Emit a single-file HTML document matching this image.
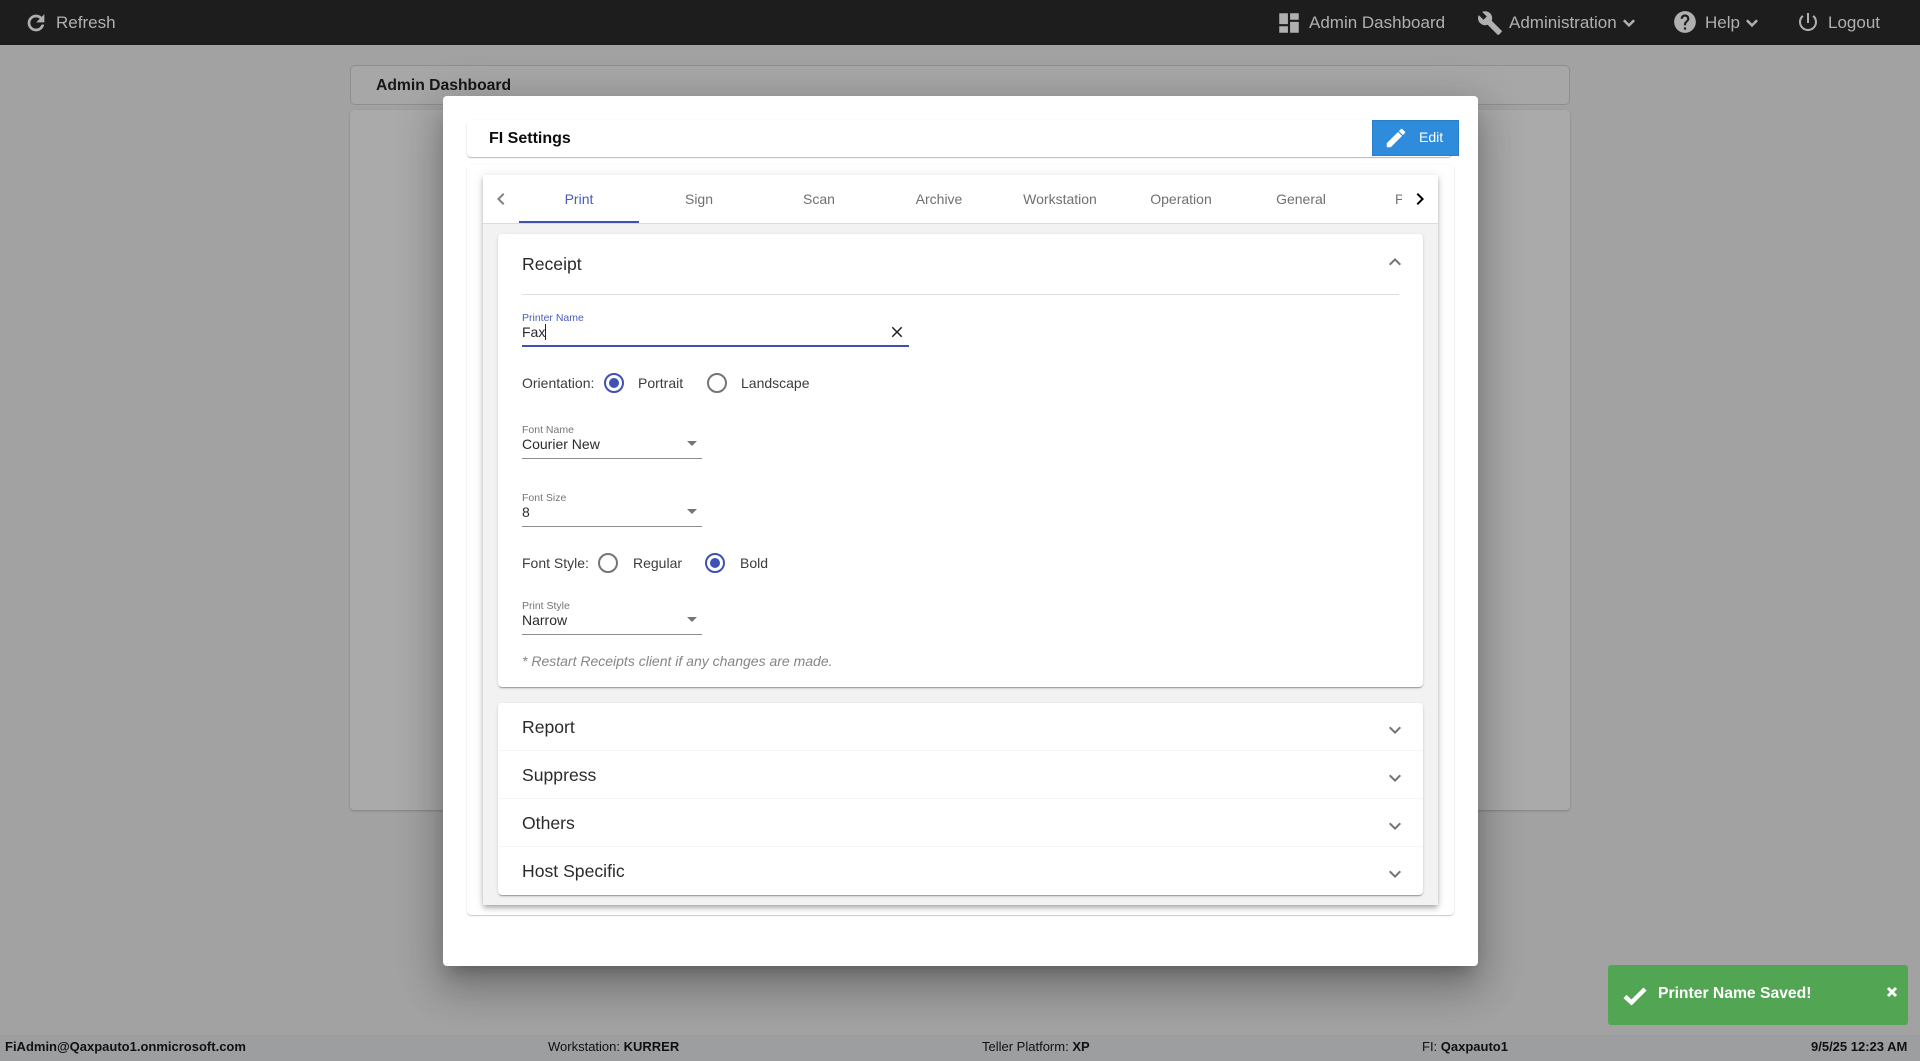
<!DOCTYPE html>
<html><head><meta charset="utf-8"><title>FI Settings</title>
<style>
*{box-sizing:border-box}
html,body{margin:0;padding:0;width:1920px;height:1061px;overflow:hidden;background:#a2a2a2;font-family:"Liberation Sans",Arial,sans-serif}
div,span.t,svg{position:absolute}
.t{white-space:nowrap;line-height:20px;height:20px;position:absolute}
.nav{color:#b0b0b0;font-size:17px}
.tab{font-size:14px;color:#707070;width:120px;text-align:center;top:189px}
.lbl{font-size:10.5px;color:#757575;left:522px}
.val{font-size:14px;color:#2b2b2b;left:522px}
.txt{font-size:14px;color:#3c3c3c}
.ttl{font-size:17.6px;color:#2a2a2a;left:522px}
.ul{left:522px;width:180px;height:1px;background:#8d8d8d}
.foot{font-size:13px;color:#111;top:1037px}
b{font-weight:bold}
</style></head>
<body>
<!-- background -->
<div style="left:0;top:0;width:1920px;height:45px;background:#1d1d1d"></div>
<svg style="left:24px;top:11px" width="24" height="24" viewBox="0 0 24 24" fill="#b0b0b0" stroke="#b0b0b0" stroke-width=".7"><path d="M17.65 6.35C16.2 4.9 14.21 4 12 4c-4.42 0-7.99 3.58-7.99 8s3.57 8 7.99 8c3.73 0 6.84-2.55 7.73-6h-2.08c-.82 2.33-3.04 4-5.65 4-3.31 0-6-2.69-6-6s2.69-6 6-6c1.66 0 3.14.69 4.22 1.78L13 11h7V4l-2.35 2.35z"/></svg>
<span class="t nav" style="left:56px;top:13px">Refresh</span>
<svg style="left:1276px;top:10px" width="26" height="26" viewBox="0 0 24 24" fill="#b0b0b0"><path d="M3 13h8V3H3v10zm0 8h8v-6H3v6zm10 0h8V11h-8v10zm0-18v6h8V3h-8z"/></svg>
<span class="t nav" style="left:1309px;top:13px">Admin Dashboard</span>
<svg style="left:1477px;top:10px" width="26" height="26" viewBox="0 0 24 24" fill="#b0b0b0"><path d="M22.7 19l-9.1-9.1c.9-2.3.4-5-1.5-6.9-2-2-5-2.4-7.4-1.3L9 6 6 9 1.6 4.7C.4 7.1.9 10.1 2.9 12.1c1.9 1.9 4.6 2.4 6.9 1.5l9.1 9.1c.4.4 1 .4 1.4 0l2.3-2.3c.5-.4.5-1.1.1-1.4z"/></svg>
<span class="t nav" style="left:1509px;top:13px">Administration</span>
<svg style="left:1618px;top:12px" width="22" height="22" viewBox="0 0 24 24" fill="#b0b0b0" stroke="#b0b0b0" stroke-width=".8"><path d="M16.59 8.59L12 13.17 7.41 8.59 6 10l6 6 6-6z"/></svg>
<svg style="left:1672px;top:9px" width="26" height="26" viewBox="0 0 24 24" fill="#b0b0b0"><path d="M12 2C6.48 2 2 6.48 2 12s4.48 10 10 10 10-4.48 10-10S17.52 2 12 2zm1 17h-2v-2h2v2zm2.07-7.75l-.9.92C13.45 12.9 13 13.5 13 15h-2v-.5c0-1.1.45-2.1 1.17-2.83l1.24-1.26c.37-.36.59-.86.59-1.41 0-1.1-.9-2-2-2s-2 .9-2 2H8c0-2.21 1.79-4 4-4s4 1.79 4 4c0 .88-.36 1.68-.93 2.25z"/></svg>
<span class="t nav" style="left:1705px;top:13px">Help</span>
<svg style="left:1741px;top:12px" width="22" height="22" viewBox="0 0 24 24" fill="#b0b0b0" stroke="#b0b0b0" stroke-width=".8"><path d="M16.59 8.59L12 13.17 7.41 8.59 6 10l6 6 6-6z"/></svg>
<svg style="left:1796px;top:10px" width="24" height="24" viewBox="0 0 24 24" fill="#b0b0b0"><path d="M13 3h-2v10h2V3zm4.83 2.17l-1.42 1.42C17.99 7.86 19 9.81 19 12c0 3.87-3.13 7-7 7s-7-3.13-7-7c0-2.19 1.01-4.14 2.58-5.42L6.17 5.17C4.23 6.82 3 9.26 3 12c0 4.97 4.03 9 9 9s9-4.03 9-9c0-2.74-1.23-5.18-3.17-6.83z"/></svg>
<span class="t nav" style="left:1828px;top:13px">Logout</span>

<div style="left:350px;top:65px;width:1220px;height:40px;border:1px solid #8f8f8f;border-radius:5px;background:#a7a7a7"></div>
<span class="t" style="left:376px;top:76px;font-size:15.7px;font-weight:bold;color:#161616">Admin Dashboard</span>
<div style="left:350px;top:110px;width:1220px;height:700px;border-radius:4px;background:#aaaaaa;box-shadow:0 1px 2px rgba(0,0,0,.2)"></div>

<!-- footer -->
<div style="left:0;top:1035px;width:1920px;height:26px;background:#9d9e9f"></div>
<span class="t foot" style="left:5px"><b>FiAdmin@Qaxpauto1.onmicrosoft.com</b></span>
<span class="t foot" style="left:548px">Workstation: <b>KURRER</b></span>
<span class="t foot" style="left:982px">Teller Platform: <b>XP</b></span>
<span class="t foot" style="left:1422px">FI: <b>Qaxpauto1</b></span>
<span class="t foot" style="left:1811px"><b>9/5/25 12:23 AM</b></span>

<!-- modal -->
<div style="left:443px;top:96px;width:1035px;height:870px;background:#fff;border-radius:4px;box-shadow:0 11px 15px -7px rgba(0,0,0,.24),0 24px 38px 3px rgba(0,0,0,.17),0 9px 46px 8px rgba(0,0,0,.14)"></div>

<div style="left:467px;top:120px;width:985px;height:37px;background:#fff;border-radius:4px;box-shadow:0 1px 1px rgba(0,0,0,.28),0 0 2px rgba(0,0,0,.04)"></div>
<span class="t" style="left:489px;top:129px;font-size:16px;font-weight:bold;color:#0c0c0c">FI Settings</span>
<div style="left:1372px;top:120px;width:87px;height:36px;background:#2f8cdc;border:1px solid #2a7fc8"></div>
<svg style="left:1384px;top:126px" width="24" height="24" viewBox="0 0 24 24" fill="#fff" stroke="#fff" stroke-width=".5"><path d="M3 17.25V21h3.75L17.81 9.94l-3.75-3.75L3 17.25zM20.71 7.04c.39-.39.39-1.02 0-1.41l-2.34-2.34c-.39-.39-1.02-.39-1.41 0l-1.83 1.83 3.75 3.75 1.83-1.83z"/></svg>
<span class="t" style="left:1419px;top:127px;font-size:14px;color:#fff">Edit</span>

<div style="left:467px;top:165px;width:987px;height:750px;background:#fff;border-radius:4px;box-shadow:0 1px 1px rgba(0,0,0,.2),0 0 2px rgba(0,0,0,.05)"></div>

<div style="left:483px;top:175px;width:955px;height:730px;background:#f2f2f2;box-shadow:0 2px 4px -1px rgba(0,0,0,.2),0 4px 5px rgba(0,0,0,.14),0 1px 10px rgba(0,0,0,.12)"></div>
<div style="left:483px;top:175px;width:955px;height:48px;background:#fff"></div>
<div style="left:483px;top:223px;width:955px;height:1px;background:#dcdcdc"></div>
<div style="left:519px;top:175px;width:883px;height:48px;overflow:hidden">
<span class="t tab" style="left:0;top:14px;color:#4a5bbd">Print</span>
<span class="t tab" style="left:120px;top:14px">Sign</span>
<span class="t tab" style="left:240px;top:14px">Scan</span>
<span class="t tab" style="left:360px;top:14px">Archive</span>
<span class="t tab" style="left:481px;top:14px">Workstation</span>
<span class="t tab" style="left:602px;top:14px">Operation</span>
<span class="t tab" style="left:722px;top:14px">General</span>
<span class="t tab" style="left:876px;top:14px;text-align:left">Printer</span>
<div style="left:0;top:46px;width:120px;height:2px;background:#3f51b5"></div>
</div>
<svg style="left:489px;top:187px" width="24" height="24" viewBox="0 0 24 24" fill="#808080"><path d="M15.41 7.41L14 6l-6 6 6 6 1.41-1.41L10.83 12z"/></svg>
<svg style="left:1408px;top:187px" width="24" height="24" viewBox="0 0 24 24" fill="#000"><path d="M10 6L8.59 7.41 13.17 12l-4.58 4.59L10 18l6-6z"/></svg>

<!-- receipt card -->
<div style="left:498px;top:234px;width:925px;height:453px;background:#fff;border-radius:4px;box-shadow:0 2px 1px -1px rgba(0,0,0,.2),0 1px 1px rgba(0,0,0,.14),0 1px 3px rgba(0,0,0,.12)"></div>
<span class="t ttl" style="top:254px">Receipt</span>
<svg style="left:1383px;top:250px" width="24" height="24" viewBox="0 0 24 24" fill="#757575"><path d="M12 8l-6 6 1.41 1.41L12 10.83l4.59 4.58L18 14z"/></svg>
<div style="left:522px;top:294px;width:877px;height:1px;background:#dfdfdf"></div>

<span class="t lbl" style="top:308px;color:#4a5bbd">Printer Name</span>
<span class="t val" style="top:322px">Fax</span>
<div style="left:545px;top:324px;width:1px;height:16px;background:#222"></div>
<svg style="left:888px;top:323px" width="18" height="18" viewBox="0 0 24 24" fill="#222"><path d="M19 6.41L17.59 5 12 10.59 6.41 5 5 6.41 10.59 12 5 17.59 6.41 19 12 13.41 17.59 19 19 17.59 13.41 12z"/></svg>
<div style="left:522px;top:345px;width:387px;height:2px;background:#3f51b5"></div>

<span class="t txt" style="left:522px;top:373px">Orientation:</span>
<svg style="left:604px;top:373px" width="20" height="20" viewBox="0 0 20 20"><circle cx="10" cy="10" r="9" fill="none" stroke="#3f51b5" stroke-width="2"/><circle cx="10" cy="10" r="5" fill="#3f51b5"/></svg>
<span class="t txt" style="left:638px;top:373px">Portrait</span>
<svg style="left:707px;top:373px" width="20" height="20" viewBox="0 0 20 20"><circle cx="10" cy="10" r="9" fill="none" stroke="#757575" stroke-width="2"/></svg>
<span class="t txt" style="left:741px;top:373px">Landscape</span>

<span class="t lbl" style="top:420px">Font Name</span>
<span class="t val" style="top:434px">Courier New</span>
<svg style="left:680px;top:431px" width="24" height="24" viewBox="0 0 24 24" fill="#757575"><path d="M7 10l5 5 5-5z"/></svg>
<div class="ul" style="top:458px"></div>

<span class="t lbl" style="top:488px">Font Size</span>
<span class="t val" style="top:502px">8</span>
<svg style="left:680px;top:499px" width="24" height="24" viewBox="0 0 24 24" fill="#757575"><path d="M7 10l5 5 5-5z"/></svg>
<div class="ul" style="top:526px"></div>

<span class="t txt" style="left:522px;top:553px">Font Style:</span>
<svg style="left:598px;top:553px" width="20" height="20" viewBox="0 0 20 20"><circle cx="10" cy="10" r="9" fill="none" stroke="#757575" stroke-width="2"/></svg>
<span class="t txt" style="left:633px;top:553px">Regular</span>
<svg style="left:705px;top:553px" width="20" height="20" viewBox="0 0 20 20"><circle cx="10" cy="10" r="9" fill="none" stroke="#3f51b5" stroke-width="2"/><circle cx="10" cy="10" r="5" fill="#3f51b5"/></svg>
<span class="t txt" style="left:740px;top:553px">Bold</span>

<span class="t lbl" style="top:596px">Print Style</span>
<span class="t val" style="top:610px">Narrow</span>
<svg style="left:680px;top:607px" width="24" height="24" viewBox="0 0 24 24" fill="#757575"><path d="M7 10l5 5 5-5z"/></svg>
<div class="ul" style="top:634px"></div>

<span class="t" style="left:522px;top:651px;font-size:14px;font-style:italic;color:#858585">* Restart Receipts client if any changes are made.</span>

<!-- collapsed -->
<div style="left:498px;top:703px;width:925px;height:192px;background:#fff;border-radius:4px;box-shadow:0 2px 1px -1px rgba(0,0,0,.2),0 1px 1px rgba(0,0,0,.14),0 1px 3px rgba(0,0,0,.12)"></div>
<div style="left:498px;top:750px;width:925px;height:1px;background:#f5f5f5"></div>
<div style="left:498px;top:798px;width:925px;height:1px;background:#f5f5f5"></div>
<div style="left:498px;top:846px;width:925px;height:1px;background:#f5f5f5"></div>
<span class="t ttl" style="top:717px">Report</span>
<span class="t ttl" style="top:765px">Suppress</span>
<span class="t ttl" style="top:813px">Others</span>
<span class="t ttl" style="top:861px">Host Specific</span>
<svg style="left:1383px;top:718px" width="24" height="24" viewBox="0 0 24 24" fill="#757575"><path d="M16.59 8.59L12 13.17 7.41 8.59 6 10l6 6 6-6z"/></svg>
<svg style="left:1383px;top:766px" width="24" height="24" viewBox="0 0 24 24" fill="#757575"><path d="M16.59 8.59L12 13.17 7.41 8.59 6 10l6 6 6-6z"/></svg>
<svg style="left:1383px;top:814px" width="24" height="24" viewBox="0 0 24 24" fill="#757575"><path d="M16.59 8.59L12 13.17 7.41 8.59 6 10l6 6 6-6z"/></svg>
<svg style="left:1383px;top:862px" width="24" height="24" viewBox="0 0 24 24" fill="#757575"><path d="M16.59 8.59L12 13.17 7.41 8.59 6 10l6 6 6-6z"/></svg>

<!-- toast -->
<div style="left:1608px;top:965px;width:300px;height:60px;background:#52a552;border-radius:3px"></div>
<svg style="left:1622px;top:985px" width="26" height="21" viewBox="0 0 26 21"><path d="M3 11.5 L9.5 17.5 L23 4" fill="none" stroke="#fff" stroke-width="4.4"/></svg>
<span class="t" style="left:1658px;top:984px;font-size:15.7px;font-weight:bold;color:#fff">Printer Name Saved!</span>
<svg style="left:1886px;top:986px" width="12" height="12" viewBox="0 0 12 12"><path d="M2 2 L10 10 M10 2 L2 10" stroke="#fff" stroke-width="3" fill="none"/></svg>
</body></html>
